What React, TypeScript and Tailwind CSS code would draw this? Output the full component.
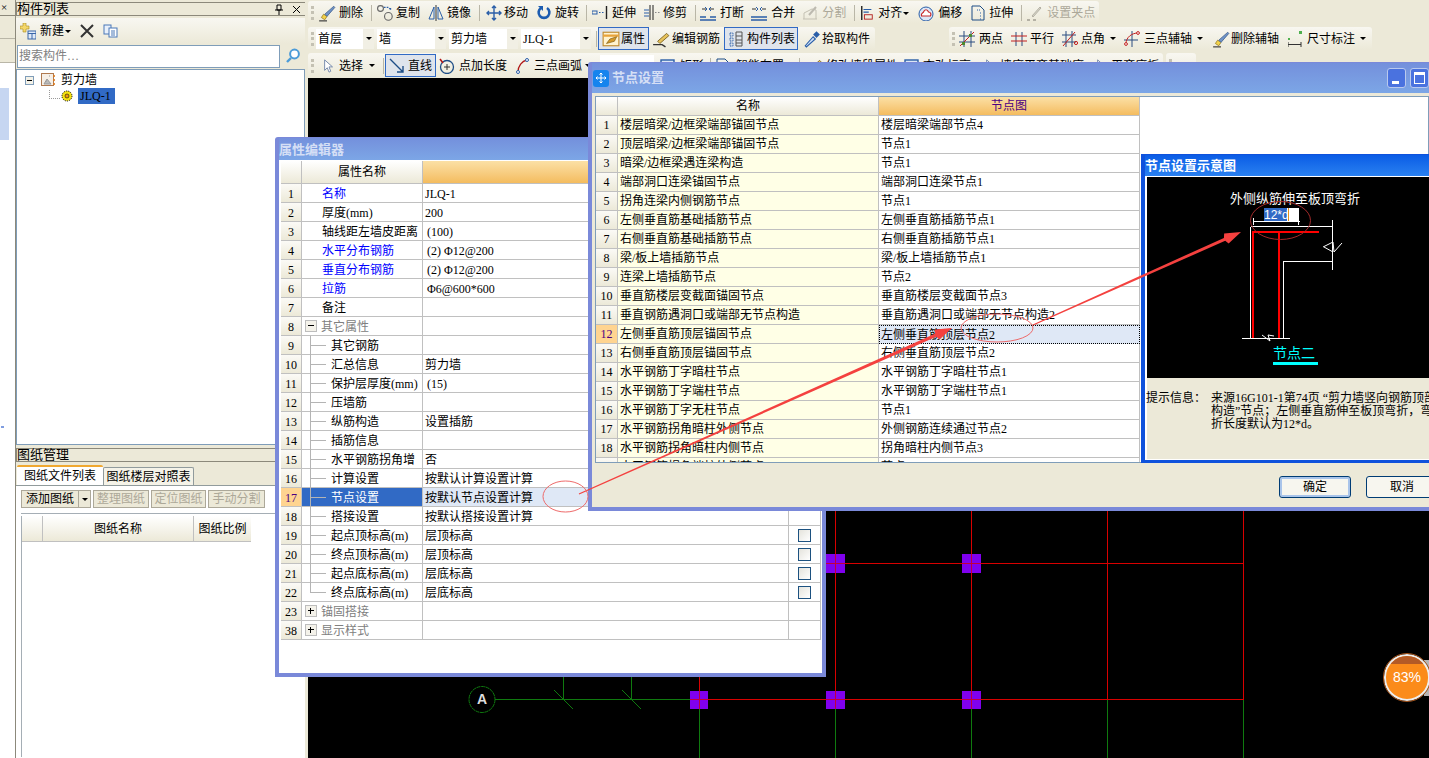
import React from 'react';

// CAD-style desktop screenshot: toolbars, side panels, canvas and three floating dialogs

const Svg = ({ children, size = 16 }: { children: React.ReactNode; size?: number }) => (
  <svg width={size} height={size} viewBox="0 0 16 16" fill="none" className="shrink-0">
    {children}
  </svg>
);

const icons: Record<string, React.ReactNode> = {
  brush: (
    <Svg size={18}>
      <path d="M1 15h7" stroke="#333" />
      <path d="M3 12l2-3 3 2-2 3z" fill="#f3d34a" stroke="#8a6d10" strokeWidth=".6" />
      <path d="M6 9l8-7 1 1-7 8z" fill="#6f93c9" stroke="#33527f" strokeWidth=".6" />
    </Svg>
  ),
  copy: (
    <Svg size={18}>
      <circle cx="4" cy="4" r="2.6" stroke="#666" />
      <circle cx="11" cy="11" r="3.4" stroke="#666" />
      <path d="M7 3h4l2 2M13 5V3" stroke="#2a5ea8" strokeDasharray="1.5 1" />
    </Svg>
  ),
  mirror: (
    <Svg>
      <path d="M1 14L6 2v12zM15 14L10 2v12z" stroke="#2a5ea8" />
      <path d="M8 0v16" stroke="#333" />
    </Svg>
  ),
  move: (
    <Svg>
      <path d="M8 1v14M1 8h14M6 3l2-2 2 2M6 13l2 2 2-2M3 6L1 8l2 2M13 6l2 2-2 2" stroke="#2a5ea8" strokeWidth="1.4" />
    </Svg>
  ),
  rotate: (
    <Svg>
      <path d="M5 3a5.4 5.4 0 1 0 6 0" stroke="#1c5cb0" strokeWidth="2.6" />
      <path d="M2 1h5v5z" fill="#1c5cb0" />
    </Svg>
  ),
  extend: (
    <Svg>
      <rect x="0" y="6" width="5" height="3" stroke="#2a5ea8" />
      <path d="M7 7.5h6" stroke="#2a5ea8" strokeDasharray="1.5 1.5" />
      <path d="M14.5 1v13" stroke="#222" strokeWidth="1.4" />
    </Svg>
  ),
  trim: (
    <Svg>
      <path d="M6 0v15M9 0v15" stroke="#222" />
      <path d="M0 5h5M0 8h5M0 11h5" stroke="#2a5ea8" />
      <path d="M11 7.5h5" stroke="#888" strokeDasharray="1.5 1.5" />
    </Svg>
  ),
  split: (
    <Svg>
      <path d="M0 12h6M10 12h6M0 15h16" stroke="#2a5ea8" strokeWidth="1.4" />
      <path d="M2 4h4M10 4h4" stroke="#333" />
      <path d="M5 2l2 2-2 2M11 2L9 4l2 2" stroke="#2a5ea8" />
    </Svg>
  ),
  merge: (
    <Svg>
      <path d="M0 12h16M0 15h16" stroke="#2a5ea8" strokeWidth="1.4" />
      <path d="M1 4h4M11 4h4" stroke="#333" />
      <path d="M5 2l2 2-2 2M11 2L9 4l2 2" stroke="#2a5ea8" />
    </Svg>
  ),
  cut: (
    <Svg>
      <path d="M1 14h14M2 14V8l8-4 4 1v9" stroke="#c4c1b3" />
      <path d="M7 10l7-8" stroke="#bdbab0" strokeWidth="2" />
    </Svg>
  ),
  align: (
    <Svg size={14}>
      <path d="M2 0v16" stroke="#222" strokeWidth="1.6" />
      <rect x="5" y="10" width="9" height="5" stroke="#b01515" />
      <path d="M4 4h9M4 7h6" stroke="#2a5ea8" strokeWidth="1.4" />
    </Svg>
  ),
  offset: (
    <Svg>
      <circle cx="8" cy="9" r="7" fill="#dce6f5" stroke="#2a5ea8" />
      <path d="M3.5 11c-1-3 2-3 2-4 1-3 4-3 5 0 2 0 3 2 2 4z" fill="#fff" stroke="#c72a2a" strokeWidth="1.2" />
    </Svg>
  ),
  stretch: (
    <Svg>
      <path d="M2 1h8l4 4v10H2z" stroke="#1d4d86" />
      <path d="M10 5h-3M10 8h2M10 11h2M10 14h2" stroke="#2a5ea8" strokeDasharray="1 1" />
    </Svg>
  ),
  grip2: (
    <Svg>
      <path d="M1 15h3M7 15h3" stroke="#b4b1a4" strokeWidth="2" />
      <path d="M6 11l8-9 1 1-8 9z" fill="#d9d7cc" stroke="#b4b1a4" />
    </Svg>
  ),
  attr: (
    <Svg size={18}>
      <rect x="1" y="2" width="14" height="12" fill="#fff3cf" stroke="#bf8a2c" />
      <path d="M1 5h14" stroke="#e8a33a" strokeWidth="2" />
      <path d="M4 12l3-4 6-2-2 4z" fill="#d59a2b" stroke="#7f5b12" strokeWidth=".6" />
    </Svg>
  ),
  pencil: (
    <Svg size={18}>
      <path d="M1 13h8l3 2" stroke="#333" strokeWidth="1.2" />
      <path d="M5 10l8-7 2 2-8 7z" fill="#e7c25a" stroke="#6d5310" strokeWidth=".7" />
    </Svg>
  ),
  list: (
    <Svg>
      <path d="M2 2h3v3H2zM2 7h3v3H2zM2 12h3v3H2z" stroke="#2a5ea8" strokeDasharray="1 .6" />
      <path d="M8 1h6v14H8zM8 5h6M8 9h6M8 12h6" stroke="#555" />
    </Svg>
  ),
  dropper: (
    <Svg size={18}>
      <path d="M2 14l7-8 2 2-8 7z" fill="#cfe0f6" stroke="#2a5ea8" />
      <path d="M9 4l3-3 3 3-3 3z" fill="#2a5ea8" />
    </Svg>
  ),
  twoPt: (
    <Svg>
      <path d="M5 0v16M12 0v16M0 5h16M0 11h16" stroke="#2a4d80" />
      <path d="M1 15L15 1" stroke="#c21f1f" />
      <rect x="3" y="11" width="3" height="3" fill="#4d8a2d" />
      <rect x="10" y="3" width="3" height="3" fill="#4d8a2d" />
    </Svg>
  ),
  parallel: (
    <Svg>
      <path d="M5 1v14M11 1v14" stroke="#2a4d80" />
      <path d="M0 5h16M0 10h16" stroke="#c21f1f" />
    </Svg>
  ),
  angle: (
    <Svg>
      <path d="M4 0v16M10 0v16M0 4h14M0 11h14" stroke="#2a4d80" />
      <path d="M1 15L13 1" stroke="#c21f1f" />
      <circle cx="14" cy="12" r="1.6" stroke="#c21f1f" />
    </Svg>
  ),
  arcAxis: (
    <Svg>
      <path d="M8 0v16M0 9h14" stroke="#2a4d80" />
      <path d="M2 13C2 6 8 2 14 2" stroke="#c21f1f" />
      <circle cx="2" cy="13" r="1.4" fill="#fff" stroke="#c21f1f" />
      <circle cx="14" cy="2" r="1.4" fill="#fff" stroke="#c21f1f" />
    </Svg>
  ),
  dim: (
    <Svg>
      <path d="M0 11v5M13 11v5M0 13.5h13" stroke="#333" />
      <path d="M2 6h0M7 6h0" stroke="#555" strokeWidth="2" />
      <rect x="11" y="0" width="3" height="3" fill="#4fb04f" />
      <rect x="0" y="7" width="2" height="2" fill="#4fb04f" />
    </Svg>
  ),
  cursor: (
    <Svg size={14}>
      <path d="M3 1v12l3-3 2 5 2-1-2-5h4z" fill="#fff" stroke="#6a7fa5" />
    </Svg>
  ),
  line: (
    <Svg>
      <path d="M1 1l13 13M14 8v6H8" stroke="#1d4d86" strokeWidth="1.4" />
    </Svg>
  ),
  ptLen: (
    <Svg>
      <circle cx="8" cy="9" r="6.5" stroke="#1d4d86" strokeWidth="1.3" />
      <path d="M8 6v6M5 9h6" stroke="#333" />
      <path d="M1 1l3 4" stroke="#b01515" strokeWidth="1.5" />
    </Svg>
  ),
  arc: (
    <Svg>
      <path d="M3 14C3 8 7 3 12 2" stroke="#b01515" strokeWidth="1.3" />
      <circle cx="3" cy="14" r="1.5" fill="#fff" stroke="#2a5ea8" />
      <circle cx="12" cy="2" r="1.5" fill="#fff" stroke="#2a5ea8" />
    </Svg>
  ),
  rect: (
    <Svg>
      <rect x="1" y="2" width="13" height="12" fill="#dce6f5" stroke="#2a5ea8" strokeWidth="1.4" />
    </Svg>
  ),
};

const Grip = () => (
  <div className="ml-[3px] h-[14px] w-[3px] shrink-0 border-l-[3px] border-dotted border-[#c4c1b3]" />
);

const Sep = ({ className }: { className: string }) => (
  <div className={`h-[16px] w-px shrink-0 bg-[#b9b6a7] ${className}`} />
);

const Caret = ({ className }: { className: string }) => (
  <div className={`flex h-full shrink-0 items-center justify-end pr-[2px] ${className}`}>
    <div className="h-0 w-0 border-x-[3px] border-t-[3px] border-x-transparent border-t-black" />
  </div>
);

type ToolProps = {
  className: string;
  iconClass: string;
  icon: string;
  label: string;
  off?: boolean;
};

const Tool = ({ className, iconClass, icon, label, off }: ToolProps) => (
  <div className={`flex shrink-0 items-center ${className} ${off ? 'text-[#aca899]' : 'text-black'}`}>
    <div className={`flex shrink-0 items-center ${iconClass}`}>{icons[icon]}</div>
    <span>{label}</span>
  </div>
);

const PressedTool = ({ className, icon, label }: { className: string; icon: string; label: string }) => (
  <div
    className={`flex h-[23px] shrink-0 items-center border border-[#316ac5] bg-[#dfe4ec] pl-[3px] ${className}`}
  >
    <div className="flex w-[19px] shrink-0 items-center">{icons[icon]}</div>
    <span>{label}</span>
  </div>
);

const Select = ({ className, boxClass, label }: { className: string; boxClass: string; label: string }) => (
  <div className={`flex h-[20px] shrink-0 items-center ${className}`}>
    <div className={`flex h-full items-center bg-white pl-[2px] ${boxClass}`}>{label}</div>
    <Caret className="w-[11px] bg-[#f1efe4]" />
  </div>
);

const toolbar = 'flex shrink-0 items-center rounded-[3px] bg-linear-to-b from-[#f8f7f1] to-[#ece9d8]';

const Toolbars = () => (
  <div className="h-[78px] shrink-0 overflow-hidden pt-px">
    <div className={`${toolbar} h-[22px] w-[791px] pt-[2px]`}>
      <Grip />
      <Tool className="ml-[4px]" iconClass="w-[21px]" icon="brush" label="删除" />
      <Sep className="ml-[8px]" />
      <Tool className="ml-[4px]" iconClass="w-[20px]" icon="copy" label="复制" />
      <Tool className="ml-[8px]" iconClass="w-[19px]" icon="mirror" label="镜像" />
      <Sep className="ml-[8px]" />
      <Tool className="ml-[6px]" iconClass="w-[18px]" icon="move" label="移动" />
      <Tool className="ml-[8px]" iconClass="w-[19px]" icon="rotate" label="旋转" />
      <Sep className="ml-[7px]" />
      <Tool className="ml-[5px]" iconClass="w-[20px]" icon="extend" label="延伸" />
      <Tool className="ml-[8px]" iconClass="w-[19px]" icon="trim" label="修剪" />
      <Sep className="ml-[8px]" />
      <Tool className="ml-[4px]" iconClass="w-[20px]" icon="split" label="打断" />
      <Tool className="ml-[7px]" iconClass="w-[20px]" icon="merge" label="合并" />
      <Tool className="ml-[7px]" iconClass="w-[20px]" icon="cut" label="分割" off />
      <Sep className="ml-[8px]" />
      <Tool className="ml-[5px]" iconClass="w-[18px]" icon="align" label="对齐" />
      <Caret className="w-[9px]" />
      <Tool className="ml-[7px]" iconClass="w-[20px]" icon="offset" label="偏移" />
      <Tool className="ml-[8px]" iconClass="w-[19px]" icon="stretch" label="拉伸" />
      <Sep className="ml-[8px]" />
      <Tool className="ml-[4px]" iconClass="w-[21px]" icon="grip2" label="设置夹点" off />
    </div>

    <div className="mt-[4px] flex">
      <div className={`${toolbar} h-[23px] w-[567px]`}>
        <Grip />
        <Select className="ml-[2px]" boxClass="w-[47px]" label="首层" />
        <Select className="ml-[3px]" boxClass="w-[58px]" label="墙" />
        <Select className="ml-[3px]" boxClass="w-[58px]" label="剪力墙" />
        <Select className="ml-[3px]" boxClass="w-[59px]" label="JLQ-1" />
        <Sep className="ml-[5px]" />
        <PressedTool className="ml-px w-[51px]" icon="attr" label="属性" />
        <Tool className="ml-[3px]" iconClass="w-[20px]" icon="pencil" label="编辑钢筋" />
        <PressedTool className="ml-[4px] w-[74px]" icon="list" label="构件列表" />
        <Tool className="ml-[5px]" iconClass="w-[19px]" icon="dropper" label="拾取构件" />
      </div>
      <div className={`${toolbar} ml-[74px] h-[23px] w-[423px]`}>
        <Grip />
        <Tool className="ml-[4px]" iconClass="w-[20px]" icon="twoPt" label="两点" />
        <Tool className="ml-[8px]" iconClass="w-[19px]" icon="parallel" label="平行" />
        <Tool className="ml-[8px]" iconClass="w-[19px]" icon="angle" label="点角" />
        <Caret className="w-[13px]" />
        <Tool className="ml-[6px]" iconClass="w-[20px]" icon="arcAxis" label="三点辅轴" />
        <Caret className="w-[13px]" />
        <Tool className="ml-[7px]" iconClass="w-[19px]" icon="brush" label="删除辅轴" />
        <Tool className="ml-[9px]" iconClass="w-[19px]" icon="dim" label="尺寸标注" />
        <Caret className="w-[13px]" />
      </div>
    </div>

    <div className="mt-[3px] flex">
      <div className={`${toolbar} h-[25px] w-[855px]`}>
        <Grip />
        <Tool className="ml-[8px]" iconClass="w-[17px]" icon="cursor" label="选择" />
        <Caret className="w-[14px]" />
        <Sep className="ml-[6px]" />
        <PressedTool className="ml-px w-[51px]" icon="line" label="直线" />
        <Tool className="ml-[3px]" iconClass="w-[20px]" icon="ptLen" label="点加长度" />
        <Tool className="ml-[8px]" iconClass="w-[19px]" icon="arc" label="三点画弧" />
        <Caret className="w-[11px]" />
        <div className="ml-[7px] h-[22px] w-[54px] shrink-0 bg-white" />
        <Tool className="ml-[6px]" iconClass="w-[20px]" icon="rect" label="矩形" />
        <Sep className="ml-[6px]" />
        <Tool className="ml-[4px]" iconClass="w-[21px]" icon="stretch" label="智能布置" />
        <Sep className="ml-[15px]" />
        <Tool className="ml-[5px]" iconClass="w-[21px]" icon="pencil" label="修改墙段属性" />
        <Tool className="ml-[6px]" iconClass="w-[19px]" icon="rect" label="查改标高" />
        <Tool className="ml-[13px]" iconClass="w-[16px]" icon="cursor" label="墙底平齐基础底" />
        <Tool className="ml-[11px]" iconClass="w-[16px]" icon="cursor" label="平齐底板" />
      </div>
      <div className={`${toolbar} ml-[3px] h-[25px] w-[30px]`}>
        <Grip />
      </div>
    </div>
  </div>
);

const PanelTitle = ({ label, right }: { label: string; right?: boolean }) => (
  <div className="flex h-[14px] shrink-0 items-center justify-between border-y border-l border-[#8c897b] text-[13px] leading-[14px]">
    <span>{label}</span>
    {right && (
      <div className="mr-[4px] flex items-center gap-[8px] text-[13px]">
        <svg width="10" height="11" viewBox="0 0 10 11">
          <path d="M3 1h4v5H3zM1 6h8M5 6v5" fill="none" stroke="#000" />
        </svg>
        <svg width="9" height="9" viewBox="0 0 9 9">
          <path d="M1 1l7 7M8 1L1 8" stroke="#000" />
        </svg>
      </div>
    )}
  </div>
);

const LeftPanels = () => (
  <div className="flex h-full w-[308px] shrink-0">
    <div className="flex w-[16px] shrink-0 flex-col border-r border-[#8c897b]">
      <div className="flex h-[16px] items-center border-b border-[#8c897b] pl-[1px] text-[11px] leading-none">×</div>
      <div className="mt-[2px] h-[21px] border-b border-[#b9b6a7]" />
      <div className="h-[24px] border-b border-[#b9b6a7]" />
      <div className="flex-1 bg-white">
        <div className="mt-[25px] h-[52px] w-[9px] bg-[#c6d6f1]" />
        <div className="mt-[286px] ml-[1px] h-[2px] w-[3px] bg-[#7f9de0]" />
      </div>
    </div>

    <div className="flex w-[289px] shrink-0 flex-col pt-[2px]">
      <PanelTitle label="构件列表" right />
      <div className="mt-[2px] flex h-[26px] shrink-0 items-center bg-linear-to-b from-[#f8f7f1] to-[#ece9d8] pl-[4px]">
        <svg width="16" height="17" viewBox="0 0 16 17" className="shrink-0">
          <path d="M3 0h3v3h3v3H6v3H3V6H0V3h3z" fill="#f4d76a" stroke="#a88a20" strokeWidth=".6" />
          <rect x="8" y="8" width="8" height="8" fill="#dfe9f7" stroke="#3a66a8" />
          <path d="M8 10.5h8M12 10.5V16" stroke="#3a66a8" />
        </svg>
        <span className="ml-[4px]">新建</span>
        <Caret className="w-[9px]" />
        <svg width="14" height="14" viewBox="0 0 14 14" className="ml-[7px] shrink-0">
          <path d="M1 1l12 12M13 1L1 13" stroke="#333" strokeWidth="2" />
        </svg>
        <svg width="15" height="14" viewBox="0 0 15 14" className="ml-[9px] shrink-0">
          <rect x="1" y="1" width="7" height="9" fill="#e8f0fb" stroke="#4a78b8" />
          <rect x="6" y="4" width="8" height="9" fill="#fff" stroke="#4a78b8" />
          <path d="M8 7h4M8 9h4M8 11h4" stroke="#4a78b8" />
        </svg>
      </div>
      <div className="flex h-[24px] shrink-0 items-center">
        <div className="ml-px flex h-[23px] w-[263px] items-center border border-[#7f9db9] bg-white pl-px text-[#808080]">
          搜索构件…
        </div>
        <svg width="16" height="16" viewBox="0 0 16 16" className="ml-[5px] shrink-0">
          <circle cx="9.5" cy="6" r="4.4" fill="#fff" stroke="#4b9bd8" strokeWidth="2" />
          <path d="M6 10l-4 4" stroke="#4b9bd8" strokeWidth="2.4" />
        </svg>
      </div>
      <div className="mt-px h-[376px] shrink-0 border border-[#7f9db9] bg-white">
        <div className="mt-[2px] flex h-[16px] items-center pl-[8px]">
          <div className="flex h-[9px] w-[9px] shrink-0 items-center justify-center border border-[#7f9db9] bg-[#f4f2e8]">
            <div className="h-px w-[5px] bg-black" />
          </div>
          <svg width="14" height="14" viewBox="0 0 14 14" className="ml-[7px] shrink-0">
            <rect x=".5" y=".5" width="12" height="12" fill="#f6efe6" stroke="#b07a50" />
            <path d="M3 11l3-5 4 5zM8 3h1M5 8h1" fill="#bbb" stroke="#999" />
            <path d="M13 2v2M13 6v2M13 10v2" stroke="#dd7a1c" strokeWidth="1.6" />
          </svg>
          <span className="ml-[6px]">剪力墙</span>
        </div>
        <div className="flex h-[16px] items-center pl-[32px]">
          <div className="mb-[4px] h-[9px] w-[11px] shrink-0 border-b border-l border-dotted border-[#999]" />
          <svg width="12" height="12" viewBox="0 0 12 12" className="ml-[1px] shrink-0">
            <circle cx="6" cy="6" r="5" fill="#f5e20f" stroke="#111" strokeDasharray="1.2 1" />
            <circle cx="6" cy="6" r="2" fill="#f09a10" stroke="#111" strokeWidth=".6" />
          </svg>
          <span className="ml-[5px] flex h-[16px] w-[37px] items-center bg-[#316ac5] pl-[2px]">JLQ-1</span>
        </div>
      </div>

      <div className="mt-[3px] shrink-0">
        <PanelTitle label="图纸管理" />
      </div>
      <div className="flex h-[23px] shrink-0 items-end pl-px">
        <div className="flex h-[20px] w-[86px] items-center justify-center rounded-t-[2px] border-t-2 border-[#f0a830] bg-white">
          图纸文件列表
        </div>
        <div className="flex h-[18px] w-[91px] items-center justify-center rounded-t-[2px] border border-b-0 border-[#919b9c] bg-[#f5f3e8]">
          图纸楼层对照表
        </div>
      </div>
      <div className="flex-1 border-t border-[#919b9c] bg-white pl-[5px]">
        <div className="mt-[4px] flex h-[18px] items-stretch gap-[2px] text-[#aca899]">
          <div className="flex w-[70px] border border-[#aca899] bg-[#ece9d8] text-black">
            <span className="flex w-[57px] items-center justify-center border-r border-[#aca899]">添加图纸</span>
            <Caret className="flex-1" />
          </div>
          <div className="flex w-[56px] items-center justify-center border border-[#aca899] bg-[#ece9d8]">整理图纸</div>
          <div className="flex w-[55px] items-center justify-center border border-[#aca899] bg-[#ece9d8]">定位图纸</div>
          <div className="flex w-[57px] items-center justify-center border border-[#aca899] bg-[#ece9d8]">手动分割</div>
        </div>
        <div className="mt-[5px] h-px bg-[#a5aeb5]" />
        <div className="mt-[2px] h-[241px] border-l border-[#a5aeb5]">
          <div className="flex h-[26px] w-[229px] border-b border-[#c0c0c0] bg-linear-to-b from-white to-[#ece9d8]">
            <div className="w-[21px] border-r border-[#c0c0c0]" />
            <div className="flex w-[151px] items-center justify-center border-r border-[#c0c0c0]">图纸名称</div>
            <div className="flex flex-1 items-center justify-center">图纸比例</div>
          </div>
        </div>
      </div>
    </div>
  </div>
);

const Canvas = () => (
  <div className="relative min-h-0 flex-1 bg-black">
    <svg
      width="1121"
      height="680"
      viewBox="308 78 1121 680"
      className="absolute inset-0"
      shapeRendering="crispEdges"
    >
      <g stroke="#d80000">
        <path d="M835.5 500V699M971.5 500V699M1107.5 500V699M1243.5 500V699M826 563.5H1243.5M699 699.5H1243.5M699.5 677V691" />
      </g>
      <g stroke="#0f7a0f">
        <path d="M835.5 700V758M971.5 700V758M1107.5 700V758M1243.5 700V758M699.5 709V758M495 699.5H690M563.5 677V699M631.5 677V699" />
      </g>
      <g stroke="#0f7a0f" shapeRendering="auto">
        <path d="M554 690l19 19M622 690l19 19" />
        <circle cx="482" cy="699.5" r="13" fill="none" strokeDasharray="4 .6" />
      </g>
      <text x="482" y="704" textAnchor="middle" fill="#ddd" fontSize="14" fontWeight="700" fontFamily="Liberation Sans">
        A
      </text>
      <g fill="#8000ee">
        <rect x="826" y="554" width="19" height="19" />
        <rect x="962" y="554" width="19" height="19" />
        <rect x="826" y="691" width="19" height="18" />
        <rect x="962" y="691" width="19" height="18" />
        <rect x="690" y="691" width="18" height="18" />
      </g>
      <path d="M690 699.5H708M699.5 691V709M826 563.5H845M962 563.5H981M835.5 554V573M971.5 554V573M826 699.5H845M962 699.5H981M835.5 691V709M971.5 691V709" stroke="#d80000" opacity=".75" />
    </svg>
  </div>
);

const numCell = 'flex shrink-0 items-center justify-center border-r border-b border-[#c0c0c0]';

type PropRowData = {
  n: number;
  name: string;
  value?: string;
  inset?: boolean;
  blue?: boolean;
  kind?: 'plain' | 'tree' | 'open' | 'closed';
  last?: boolean;
  check?: boolean;
  active?: boolean;
};

const propRows: PropRowData[] = [
  { n: 1, name: '名称', value: 'JLQ-1', blue: true },
  { n: 2, name: '厚度(mm)', value: '200' },
  { n: 3, name: '轴线距左墙皮距离', value: '(100)', inset: true },
  { n: 4, name: '水平分布钢筋', value: '(2) Φ12@200', blue: true, inset: true },
  { n: 5, name: '垂直分布钢筋', value: '(2) Φ12@200', blue: true, inset: true },
  { n: 6, name: '拉筋', value: 'Φ6@600*600', blue: true, inset: true },
  { n: 7, name: '备注' },
  { n: 8, name: '其它属性', kind: 'open' },
  { n: 9, name: '其它钢筋', kind: 'tree' },
  { n: 10, name: '汇总信息', value: '剪力墙', kind: 'tree' },
  { n: 11, name: '保护层厚度(mm)', value: '(15)', kind: 'tree', inset: true },
  { n: 12, name: '压墙筋', kind: 'tree' },
  { n: 13, name: '纵筋构造', value: '设置插筋', kind: 'tree' },
  { n: 14, name: '插筋信息', kind: 'tree' },
  { n: 15, name: '水平钢筋拐角增', value: '否', kind: 'tree' },
  { n: 16, name: '计算设置', value: '按默认计算设置计算', kind: 'tree' },
  { n: 17, name: '节点设置', value: '按默认节点设置计算', kind: 'tree', active: true },
  { n: 18, name: '搭接设置', value: '按默认搭接设置计算', kind: 'tree' },
  { n: 19, name: '起点顶标高(m)', value: '层顶标高', kind: 'tree', check: true },
  { n: 20, name: '终点顶标高(m)', value: '层顶标高', kind: 'tree', check: true },
  { n: 21, name: '起点底标高(m)', value: '层底标高', kind: 'tree', check: true },
  { n: 22, name: '终点底标高(m)', value: '层底标高', kind: 'tree', check: true, last: true },
  { n: 23, name: '锚固搭接', kind: 'closed' },
  { n: 38, name: '显示样式', kind: 'closed' },
];

const Expander = ({ open }: { open: boolean }) => (
  <div className="relative ml-[3px] mr-[4px] h-[12px] w-[12px] shrink-0 border border-[#bdbdbd] bg-[#f4f2ea]">
    <div className="absolute left-[2px] top-[4px] h-px w-[6px] bg-black" />
    {!open && <div className="absolute left-[4px] top-[2px] h-[6px] w-px bg-black" />}
  </div>
);

const PropRow = ({ row }: { row: PropRowData }) => {
  const kind = row.kind ?? 'plain';
  return (
    <div className="flex h-[19px]">
      <div
        className={`${numCell} w-[21px] ${
          row.active ? 'bg-[#ffd490] text-[#4b0082]' : 'bg-linear-to-b from-[#fbfaf6] to-[#ece9d8]'
        }`}
      >
        <span className="mt-[2px]">{row.n}</span>
      </div>
      <div
        className={`flex w-[121px] shrink-0 items-center border-r border-b border-[#c0c0c0] ${
          row.active ? 'bg-[#316ac5] text-white' : ''
        } ${row.blue ? 'text-[#0000ff]' : ''} ${kind === 'open' || kind === 'closed' ? 'text-[#808080]' : ''}`}
      >
        {kind === 'plain' && <span className="ml-[20px] mt-[2px] whitespace-nowrap">{row.name}</span>}
        {kind === 'open' && <Expander open />}
        {kind === 'closed' && <Expander open={false} />}
        {(kind === 'open' || kind === 'closed') && <span className="mt-[2px]">{row.name}</span>}
        {kind === 'tree' && (
          <>
            <div className="relative ml-[8px] h-[18px] w-[20px] shrink-0">
              <div className={`absolute left-0 top-0 w-px bg-[#b4b4b4] ${row.last ? 'h-[10px]' : 'h-[19px]'}`} />
              <div className="absolute left-0 top-[9px] h-px w-[16px] bg-[#b4b4b4]" />
            </div>
            <span className="ml-px mt-[2px] whitespace-nowrap">{row.name}</span>
          </>
        )}
      </div>
      <div
        className={`flex w-[366px] shrink-0 items-center border-r border-b border-[#c0c0c0] ${
          row.inset ? 'pl-[4px]' : 'pl-[2px]'
        } ${row.active ? 'bg-[#dfe8f6]' : ''}`}
      >
        <span className="mt-[2px]">{row.value}</span>
      </div>
      <div className="flex w-[32px] shrink-0 items-center justify-center border-r border-b border-[#c0c0c0]">
        {row.check && (
          <div className="h-[13px] w-[13px] border border-[#1c5180] bg-linear-to-br from-[#e4e3dc] to-white" />
        )}
      </div>
    </div>
  );
};

const titleFaded = 'bg-linear-to-b from-[#7490dc] to-[#7ca6e6] font-bold text-[#d5dff5]';

const PropertyEditor = () => (
  <div className="absolute left-[275px] top-[137px] flex h-[540px] w-[551px] flex-col rounded-t-[3px] border-x-4 border-t border-b-4 border-[#7a89d9]">
    <div className={`flex h-[22px] shrink-0 items-center pt-[2px] text-[13px] ${titleFaded}`}>属性编辑器</div>
    <div className="flex-1 bg-white pl-[2px] pt-px">
      <div className="flex h-[23px]">
        <div className={`${numCell} w-[21px] bg-linear-to-b from-white to-[#ece9d8]`} />
        <div className="flex w-[121px] shrink-0 items-center justify-center border-r border-b border-[#c0c0c0] bg-linear-to-b from-white to-[#ece9d8]">
          属性名称
        </div>
        <div className="w-[398px] shrink-0 border-b border-[#c0c0c0] bg-linear-to-b from-[#fbe0a5] to-[#f4bc5e]" />
      </div>
      {propRows.map((r) => (
        <PropRow key={r.n} row={r} />
      ))}
    </div>
  </div>
);

const nodeRows: [string, string][] = [
  ['楼层暗梁/边框梁端部锚固节点', '楼层暗梁端部节点4'],
  ['顶层暗梁/边框梁端部锚固节点', '节点1'],
  ['暗梁/边框梁遇连梁构造', '节点1'],
  ['端部洞口连梁锚固节点', '端部洞口连梁节点1'],
  ['拐角连梁内侧钢筋节点', '节点1'],
  ['左侧垂直筋基础插筋节点', '左侧垂直筋插筋节点1'],
  ['右侧垂直筋基础插筋节点', '右侧垂直筋插筋节点1'],
  ['梁/板上墙插筋节点', '梁/板上墙插筋节点1'],
  ['连梁上墙插筋节点', '节点2'],
  ['垂直筋楼层变截面锚固节点', '垂直筋楼层变截面节点3'],
  ['垂直钢筋遇洞口或端部无节点构造', '垂直筋遇洞口或端部无节点构造2'],
  ['左侧垂直筋顶层锚固节点', '左侧垂直筋顶层节点2'],
  ['右侧垂直筋顶层锚固节点', '右侧垂直筋顶层节点2'],
  ['水平钢筋丁字暗柱节点', '水平钢筋丁字暗柱节点1'],
  ['水平钢筋丁字端柱节点', '水平钢筋丁字端柱节点1'],
  ['水平钢筋丁字无柱节点', '节点1'],
  ['水平钢筋拐角暗柱外侧节点', '外侧钢筋连续通过节点2'],
  ['水平钢筋拐角暗柱内侧节点', '拐角暗柱内侧节点3'],
  ['水平钢筋拐角端柱外侧节点', '节点1'],
];

const NodeDialog = () => (
  <div className="absolute left-[588px] top-[62px] flex h-[449px] w-[845px] flex-col rounded-t-[3px] border-x-4 border-t border-b-4 border-[#7a89d9]">
    <div className={`flex h-[30px] shrink-0 items-center justify-between ${titleFaded}`}>
      <div className="flex items-center">
        <div className="ml-px flex h-[17px] w-[16px] items-center justify-center rounded-[3px] bg-[#1584ee]">
          <svg width="12" height="12" viewBox="0 0 12 12">
            <path d="M6 1v10M1 6h10M4.5 2.5L6 1l1.5 1.5M4.5 9.5L6 11l1.5-1.5M2.5 4.5L1 6l1.5 1.5M9.5 4.5L11 6 9.5 7.5" fill="none" stroke="#fff" />
          </svg>
        </div>
        <span className="ml-[3px] text-[13px]">节点设置</span>
      </div>
      <div className="flex gap-[4px]">
        <div className="relative h-[20px] w-[19px] rounded-[3px] border border-[#b9c9ee] bg-[#4a72df]">
          <div className="absolute bottom-[3px] left-[4px] h-[3px] w-[7px] bg-white" />
        </div>
        <div className="h-[20px] w-[19px] rounded-[3px] border border-[#b9c9ee] bg-[#4a72df] p-[3px]">
          <div className="h-full w-full border-t-[3px] border-x border-b border-white" />
        </div>
      </div>
    </div>
    <div className="flex-1 bg-[#ece9d8] pl-[3px] pt-[3px]">
      <div className="h-[367px] overflow-hidden border border-[#7f9db9] bg-white">
        <div className="flex h-[19px]">
          <div className={`${numCell} w-[22px] bg-linear-to-b from-white to-[#ece9d8]`} />
          <div className="flex w-[261px] shrink-0 items-center justify-center border-r border-b border-[#c0c0c0] bg-linear-to-b from-white to-[#ece9d8]">
            名称
          </div>
          <div className="flex w-[261px] shrink-0 items-center justify-center border-r border-b border-[#c0c0c0] bg-linear-to-b from-[#fbe0a5] to-[#f4bc5e] text-[#4b0082]">
            节点图
          </div>
        </div>
        {nodeRows.map(([name, value], i) => (
          <div key={i} className="flex h-[19px]">
            <div
              className={`${numCell} w-[22px] ${
                i === 11 ? 'bg-[#ffd490] text-[#4b0082]' : 'bg-linear-to-b from-[#fbfaf6] to-[#ece9d8]'
              }`}
            >
              {i + 1}
            </div>
            <div className="flex w-[261px] shrink-0 items-center border-r border-b border-[#c0c0c0] bg-[#ffffe6] pl-[2px]">
              {name}
            </div>
            {i === 11 ? (
              <div className="flex w-[261px] shrink-0 items-center border border-dotted border-black bg-[#dfe8f6] pl-px">
                {value}
              </div>
            ) : (
              <div className="flex w-[261px] shrink-0 items-center border-r border-b border-[#c0c0c0] pl-[2px]">
                {value}
              </div>
            )}
          </div>
        ))}
      </div>
      <div className="ml-[684px] mt-[13px] flex gap-[15px]">
        <div className="flex h-[22px] w-[72px] shrink-0 items-center justify-center rounded-[3px] border border-[#003c74] bg-[#f7f6ef] shadow-[inset_0_0_0_2px_#a9c4ea]">
          确定
        </div>
        <div className="flex h-[22px] w-[72px] shrink-0 items-center justify-center rounded-[3px] border border-[#003c74] bg-[#f7f6ef]">
          取消
        </div>
      </div>
    </div>
  </div>
);

const NodePreview = () => (
  <div className="absolute left-[1141px] top-[154px] flex h-[309px] w-[296px] flex-col border-x-4 border-t border-b-[3px] border-[#0f52dc]">
    <div className="flex h-[21px] shrink-0 items-center bg-linear-to-b from-[#0a5ce6] to-[#2a80f0] text-[13px] font-bold text-white">
      节点设置示意图
    </div>
    <div className="flex-1 border-x-2 border-y border-white bg-[#ece9d8]">
      <svg width="284" height="201" viewBox="1147 177 284 201" className="block bg-black">
        <text x="1295" y="203" textAnchor="middle" fill="#fff" fontSize="13">
          外侧纵筋伸至板顶弯折
        </text>
        <g stroke="#fff" fill="none" shapeRendering="crispEdges">
          <path d="M1250.5 227V338M1250.5 226.5H1332.5M1332.5 220V270M1283.5 261.5H1332M1283.5 261V338M1242 338.5H1290M1253 221.5H1300M1253 218V225M1298 218V225" />
        </g>
        <path d="M1323 247l10-5 1 10 8-9M1324 247l9 5M1262 335l8 6-2-6 6 1" stroke="#fff" fill="none" />
        <path d="M1252.5 338V231M1252 231.5H1319M1279 232V338" stroke="#f00" strokeWidth="2" fill="none" shapeRendering="crispEdges" />
        <rect x="1264" y="208" width="35" height="13" fill="#fff" />
        <rect x="1264" y="208" width="23" height="13" fill="#316ac5" />
        <rect x="1288" y="208" width="1" height="13" fill="#d88a1a" />
        <text x="1264" y="219" fill="#fff" fontSize="12" fontFamily="Liberation Sans">
          12*d
        </text>
        <text x="1273" y="358" fill="#00ffff" fontSize="14">
          节点二
        </text>
        <rect x="1273" y="362" width="45" height="3" fill="#00ffff" />
      </svg>
      <div className="-ml-px flex pt-[14px] leading-[13px]">
        <span className="w-[65px] shrink-0">提示信息：</span>
        <div className="whitespace-nowrap">
          <div>来源16G101-1第74页 “剪力墙竖向钢筋顶部</div>
          <div>构造”节点；左侧垂直筋伸至板顶弯折，弯</div>
          <div>折长度默认为12*d。</div>
        </div>
      </div>
    </div>
  </div>
);

// red annotation arrow, thin at the tail and wider towards the head
const arrowPoints = (x1: number, y1: number, x2: number, y2: number) => {
  const len = Math.hypot(x2 - x1, y2 - y1);
  const ux = (x2 - x1) / len;
  const uy = (y2 - y1) / len;
  const px = -uy;
  const py = ux;
  const nx = x2 - ux * 18;
  const ny = y2 - uy * 18;
  const pts = [
    [x1 + px * 0.6, y1 + py * 0.6],
    [nx + px * 1.6, ny + py * 1.6],
    [nx + ux * 2 + px * 5.5, ny + uy * 2 + py * 5.5],
    [x2, y2],
    [nx + ux * 2 - px * 5.5, ny + uy * 2 - py * 5.5],
    [nx - px * 1.6, ny - py * 1.6],
    [x1 - px * 0.6, y1 - py * 0.6],
  ];
  return pts.map((p) => p.join(',')).join(' ');
};

const Annotations = () => (
  <svg width="1429" height="758" viewBox="0 0 1429 758" className="pointer-events-none absolute inset-0">
    <polygon points={arrowPoints(579, 494, 952, 328)} fill="#f4413f" />
    <polygon points={arrowPoints(1033, 325, 1241, 232)} fill="#f4413f" />
    <ellipse cx="565.5" cy="496.5" rx="22.5" ry="15.5" fill="none" stroke="#ee6a6a" />
    <ellipse cx="997" cy="328" rx="36" ry="14" fill="none" stroke="#ee6a6a" />
    <ellipse cx="1280.5" cy="220.5" rx="30" ry="19" fill="none" stroke="#a32a2a" />
  </svg>
);

const Badge = () => (
  <>
    <div className="absolute left-[1424px] top-[660px] h-[36px] w-[5px] bg-[#b5b5b5]" />
    <div className="absolute left-[1384px] top-[654px] flex h-[47px] w-[46px] flex-col overflow-hidden rounded-full border-[2px] border-[#eeeeee] bg-[#fb8b1a] outline outline-[#a4531a]">
      <div className="h-[8px] shrink-0 bg-[#b35a26]" />
      <div className="flex flex-1 items-center justify-center pb-[9px] font-['Liberation_Sans',sans-serif] text-[14px] text-white">
        83%
      </div>
    </div>
  </>
);

const App: React.FC = () => {
  return (
    <div className="relative flex h-[758px] w-[1429px] overflow-hidden bg-[#ece9d8] font-['Liberation_Serif','Noto_Sans_CJK_SC',serif] text-[12px] leading-[16px] text-black">
      <LeftPanels />
      <div className="flex min-w-0 flex-1 flex-col">
        <Toolbars />
        <Canvas />
      </div>
      <PropertyEditor />
      <NodeDialog />
      <NodePreview />
      <Annotations />
      <Badge />
    </div>
  );
};

export default App;
